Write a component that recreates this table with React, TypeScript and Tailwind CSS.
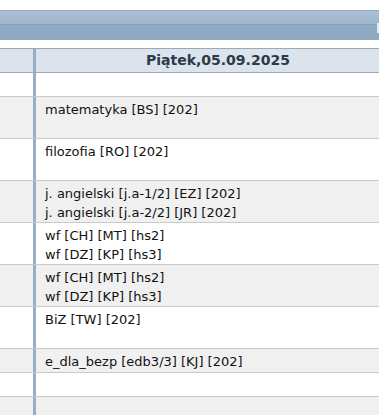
export default function App() {
  const rows: { lines: string[]; h: string; bg: string }[] = [
    { lines: [], h: "h-[23px]", bg: "bg-white" },
    { lines: ["matematyka [BS] [202]"], h: "h-[41px]", bg: "bg-[#f0f0f0]" },
    { lines: ["filozofia [RO] [202]"], h: "h-[41px]", bg: "bg-white" },
    {
      lines: ["j. angielski [j.a-1/2] [EZ] [202]", "j. angielski [j.a-2/2] [JR] [202]"],
      h: "h-[41px]",
      bg: "bg-[#f0f0f0]",
    },
    { lines: ["wf [CH] [MT] [hs2]", "wf [DZ] [KP] [hs3]"], h: "h-[41px]", bg: "bg-white" },
    { lines: ["wf [CH] [MT] [hs2]", "wf [DZ] [KP] [hs3]"], h: "h-[41px]", bg: "bg-[#f0f0f0]" },
    { lines: ["BiZ [TW] [202]"], h: "h-[41px]", bg: "bg-white" },
    { lines: ["e_dla_bezp [edb3/3] [KJ] [202]"], h: "h-[23px]", bg: "bg-[#f0f0f0]" },
    { lines: [], h: "h-[23px]", bg: "bg-white" },
    { lines: [], h: "h-[40px]", bg: "bg-[#f0f0f0]" },
  ];

  return (
    <div className="w-[379px] h-[415px] overflow-hidden bg-white font-['DejaVu_Sans',sans-serif]">
      <div className="h-[10px]" />
      {/* toolbar */}
      <div className="relative h-[31px] border-t border-[#93aac0]">
        <div className="h-[14px] bg-gradient-to-b from-[#abc0d4] to-[#9db4ca] border-b border-[#86a0b9]" />
        <div className="h-[15px] bg-[#8ea9c2]" />
        <div className="absolute right-0 top-[12px] w-[2px] h-[10px] bg-[#e4ecf5]" />
      </div>
      <div className="h-[7px]" />
      {/* table */}
      <div className="w-[392px]">
        <div className="flex h-[25px] bg-[#dce3ea] border-y border-[#93aac0]">
          <div className="w-[33px]" />
          <div className="w-[3px] bg-[#98aec4]" />
          <div className="flex-1 flex items-center pl-[110px] text-[14px] font-bold text-[#2a3a4c]">
            Piątek,05.09.2025
          </div>
        </div>
        {rows.map((r, i) => (
          <div key={i} className={`flex border-b border-[#c9c9c9] ${r.bg}`}>
            <div className={`w-[33px] ${r.h}`} />
            <div className="w-[3px] bg-[#98aec4]" />
            <div className="flex-1 pl-[9px] pt-[3px] text-[13px] leading-[19px] text-[#111]">
              {r.lines.map((l, j) => (
                <div key={j}>{l}</div>
              ))}
            </div>
          </div>
        ))}
      </div>
    </div>
  );
}
